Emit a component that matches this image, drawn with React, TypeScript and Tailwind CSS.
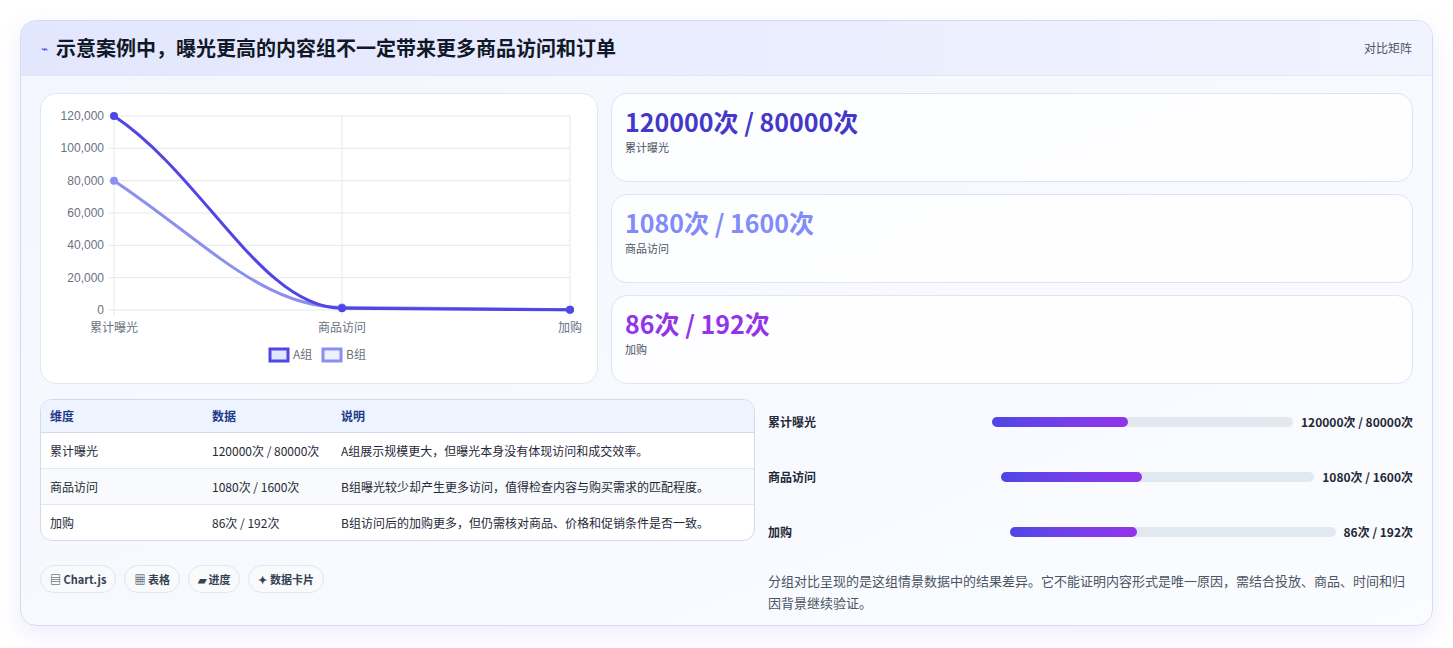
import React from "react";

const F = { fontFamily: '"Noto Sans CJK SC","Noto Sans",sans-serif' };

function Chart() {
  const x0 = 73, x1 = 529, y0 = 22, y1 = 216;
  const ys = (v: number) => y1 - (v / 120000) * (y1 - y0);
  const xs = [x0, (x0 + x1) / 2, x1];
  const ticks = [0, 20000, 40000, 60000, 80000, 100000, 120000];
  const A = [120000, 1080, 86], B = [80000, 1600, 192];
  const path = (d: number[]) => {
    const p = d.map((v, i) => [xs[i], ys(v)]);
    return `M${p[0][0]},${p[0][1]} C${p[0][0] + 90},${p[0][1] + 60} ${p[1][0] - 80},${p[1][1]} ${p[1][0]},${p[1][1]} L${p[2][0]},${p[2][1]}`;
  };
  return (
    <svg width="557" height="290" className="block">
      {ticks.map((t) => (
        <g key={t}>
          <line x1={x0 - 6} x2={x1} y1={ys(t)} y2={ys(t)} stroke="#e5e7eb" />
          <text x={x0 - 10} y={ys(t) + 4} textAnchor="end" fontSize="12" fill="#6b7280" fontFamily="Liberation Sans, sans-serif">
            {t.toLocaleString("en-US")}
          </text>
        </g>
      ))}
      {xs.map((x, i) => (
        <line key={i} x1={x} x2={x} y1={y0} y2={y1 + 6} stroke="#e5e7eb" />
      ))}
      {["累计曝光", "商品访问", "加购"].map((l, i) => (
        <text key={l} x={xs[i]} y={238} textAnchor="middle" fontSize="12" fill="#6b7280" style={F}>{l}</text>
      ))}
      <path d={path(B)} fill="none" stroke="#8b8ff0" strokeWidth="3" />
      <path d={path(A)} fill="none" stroke="#4f46e5" strokeWidth="3" />
      {B.map((v, i) => <circle key={"b" + i} cx={xs[i]} cy={ys(v)} r="4" fill="#8b8ff0" />)}
      {A.map((v, i) => <circle key={"a" + i} cx={xs[i]} cy={ys(v)} r="4" fill="#4f46e5" />)}
      <rect x="229" y="255" width="18" height="12" fill="#e0e7ff" stroke="#4f46e5" strokeWidth="3" />
      <text x="252" y="265" fontSize="12" fill="#6b7280" style={F}>A组</text>
      <rect x="282" y="255" width="18" height="12" fill="#eef0ff" stroke="#8b8ff0" strokeWidth="3" />
      <text x="305" y="265" fontSize="12" fill="#6b7280" style={F}>B组</text>
    </svg>
  );
}

const stats = [
  { v: "120000次 / 80000次", l: "累计曝光", c: "text-[#4338ca]" },
  { v: "1080次 / 1600次", l: "商品访问", c: "text-[#818cf8]" },
  { v: "86次 / 192次", l: "加购", c: "text-[#9333ea]" },
];

const rows = [
  ["累计曝光", "120000次 / 80000次", "A组展示规模更大，但曝光本身没有体现访问和成交效率。", "45%"],
  ["商品访问", "1080次 / 1600次", "B组曝光较少却产生更多访问，值得检查内容与购买需求的匹配程度。", "45%"],
  ["加购", "86次 / 192次", "B组访问后的加购更多，但仍需核对商品、价格和促销条件是否一致。", "39%"],
];

export default function App() {
  return (
    <div className="w-[1453px] h-[648px] bg-white pt-[20px] pl-[20px]" style={F}>
      <div className="w-[1413px] h-[606px] rounded-2xl border border-[#d6dafa] shadow-[0_8px_24px_rgba(79,70,229,0.10)] overflow-hidden bg-gradient-to-br from-[#f4f6ff] to-[#fbfcff]">
        <div className="h-[55px] flex items-center justify-between px-[20px] bg-gradient-to-r from-[#e3e7fd] to-[#f1f3ff] border-b border-[#e3e6f7]">
          <div className="flex items-center gap-2">
            <span className="text-[#4f46e5] text-[12px]">⌁</span>
            <span className="text-[20px] font-bold text-[#111827]">示意案例中，曝光更高的内容组不一定带来更多商品访问和订单</span>
          </div>
          <span className="text-[12px] text-[#4b5563]">对比矩阵</span>
        </div>
        <div className="px-[19px] pt-[17px]">
          <div className="flex gap-[13px]">
            <div className="w-[558px] h-[291px] rounded-2xl border border-[#e3e6f3] bg-white">
              <Chart />
            </div>
            <div className="flex-1 flex flex-col gap-[12px]">
              {stats.map((s) => (
                <div key={s.l} className="h-[89px] rounded-2xl border border-[#dfe3f5] bg-white/80 px-[13px] pt-[10px]">
                  <div className={`text-[25px] font-bold leading-[34px] ${s.c}`}>{s.v}</div>
                  <div className="text-[11px] text-[#4b5563] mt-[1px]">{s.l}</div>
                </div>
              ))}
            </div>
          </div>
          <div className="flex gap-[13px] mt-[15px]">
            <div className="w-[715px]">
              <div className="rounded-xl border border-[#d5dbe6] overflow-hidden bg-white text-[12px] text-[#1f2937]">
                <div className="flex h-[33px] items-center bg-[#eef4ff] text-[#1e3a8a] font-semibold border-b border-[#d5dbe6]">
                  <div className="w-[171px] pl-[9px]">维度</div>
                  <div className="w-[129px]">数据</div>
                  <div className="flex-1">说明</div>
                </div>
                {rows.map((r, i) => (
                  <div key={r[0]} className={`flex py-[8px] leading-[19px] ${i < 2 ? "border-b border-[#e2e6ee]" : ""} ${i === 1 ? "bg-[#f8fafc]" : ""}`}>
                    <div className="w-[171px] pl-[9px]">{r[0]}</div>
                    <div className="w-[129px] pr-[16px]">{r[1]}</div>
                    <div className="flex-1">{r[2]}</div>
                  </div>
                ))}
              </div>
              <div className="flex gap-[8px] mt-[24px]">
                {["▤ Chart.js", "▦ 表格", "▰ 进度", "✦ 数据卡片"].map((t) => (
                  <span key={t} className="h-[28px] px-[9px] flex items-center rounded-full border border-[#e2e6ef] bg-[#f8fafc] text-[11px] font-semibold text-[#374151]">{t}</span>
                ))}
              </div>
            </div>
            <div className="flex-1 pt-[12px]">
              {rows.map((r, i) => (
                <div key={r[0]} className={`flex items-center gap-[8px] h-[22px] ${i ? "mt-[33px]" : ""}`}>
                  <div className="flex-[0.72_1_0] text-[12px] font-semibold text-[#1f2937]">{r[0]}</div>
                  <div className="flex-[1_1_0] h-[10px] rounded-full bg-[#e2e8f0]">
                    <div className="h-full rounded-full bg-gradient-to-r from-[#4f46e5] to-[#9333ea]" style={{ width: r[3] }} />
                  </div>
                  <div className="text-[12px] font-bold text-[#1f2937] whitespace-nowrap">{r[1]}</div>
                </div>
              ))}
              <p className="mt-[27px] text-[13px] leading-[22px] text-[#4b5563]">
                分组对比呈现的是这组情景数据中的结果差异。它不能证明内容形式是唯一原因，需结合投放、商品、时间和归因背景继续验证。
              </p>
            </div>
          </div>
        </div>
      </div>
    </div>
  );
}
